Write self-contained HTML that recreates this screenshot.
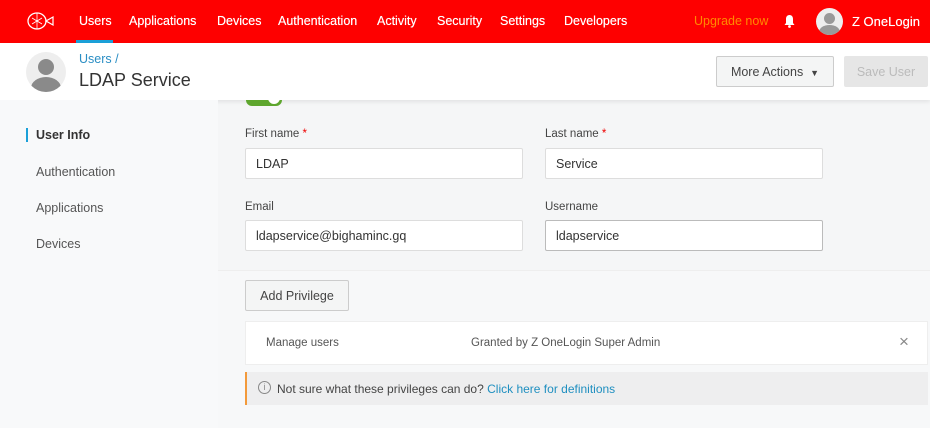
<!DOCTYPE html>
<html><head><style>
*{box-sizing:border-box;margin:0;padding:0}
body{width:930px;height:428px;overflow:hidden;font-family:"Liberation Sans",sans-serif;background:#f5f6f7;position:relative;color:#333}
.top{position:absolute;left:0;top:0;width:930px;height:43px;background:#fe0000;color:#fff;font-size:12.5px;text-shadow:0 0 .4px #fff}
.top span{position:absolute;top:14px}
.sub{position:absolute;left:0;top:43px;width:930px;height:57px;background:#fff;box-shadow:0 2px 4px rgba(0,0,0,.08)}
.side{position:absolute;left:0;top:100px;width:218px;height:328px;background:#f8f9fa}
.side div{position:absolute;left:36px;font-size:12.5px;color:#555}
.lbl{position:absolute;font-size:11.5px;color:#444}
.inp{position:absolute;width:278px;height:31px;background:#fff;border:1px solid #ddd;border-radius:2px;font-size:12.5px;padding:8px 10px;color:#333}
.btn{position:absolute;border:1px solid #ccc;background:#f4f5f5;font-size:12.5px;color:#444;text-align:center;border-radius:2px}
</style></head><body>
<div class="top">
<svg style="position:absolute;left:26px;top:10px" width="30" height="22" viewBox="0 0 30 22"><ellipse cx="11" cy="11" rx="9" ry="8" fill="none" stroke="#fff" stroke-width="1.3"/><path d="M6 8l10 6M6 14l10-6M11 3v16" stroke="#fff" stroke-width=".8"/><path d="M20 11l7-4v8z" fill="none" stroke="#fff" stroke-width="1.2"/></svg>
<span style="left:79px">Users</span>
<div style="position:absolute;left:76px;top:40px;width:37px;height:3px;background:#1ba0d8"></div>
<span style="left:129px">Applications</span>
<span style="left:217px">Devices</span>
<span style="left:278px">Authentication</span>
<span style="left:377px">Activity</span>
<span style="left:437px">Security</span>
<span style="left:500px">Settings</span>
<span style="left:564px">Developers</span>
<span style="left:694px;color:#ff8a00;text-shadow:none">Upgrade now</span>
<svg style="position:absolute;left:783px;top:14px" width="13" height="14" viewBox="0 0 13 14"><path d="M6.5 1C4 1 3 3 3 5v4L1.5 11h10L10 9V5c0-2-1-4-3.5-4z" fill="#fff"/><circle cx="6.5" cy="12.5" r="1.4" fill="#fff"/></svg>
<div style="position:absolute;left:816px;top:8px;width:27px;height:27px;border-radius:50%;background:#eee;overflow:hidden"><div style="position:absolute;left:8px;top:5px;width:11px;height:11px;border-radius:50%;background:#999"></div><div style="position:absolute;left:3px;top:17px;width:21px;height:14px;border-radius:50%;background:#999"></div></div>
<span style="left:852px;font-size:13px">Z OneLogin</span>
</div>
<div class="sub">
<div style="position:absolute;left:26px;top:9px;width:40px;height:40px;border-radius:50%;background:#eee;overflow:hidden"><div style="position:absolute;left:12px;top:7px;width:16px;height:16px;border-radius:50%;background:#8a8a8a"></div><div style="position:absolute;left:5px;top:25px;width:30px;height:22px;border-radius:50%;background:#8a8a8a"></div></div>
<div style="position:absolute;left:79px;top:9px;font-size:12.5px;color:#2a8ec4">Users /</div>
<div style="position:absolute;left:79px;top:27px;font-size:18px;color:#333">LDAP Service</div>
<div class="btn" style="left:716px;top:13px;width:118px;height:31px;padding-top:8px">More Actions &nbsp;<span style="font-size:9px">▼</span></div>
<div class="btn" style="left:844px;top:13px;width:84px;height:31px;padding-top:8px;background:#e6e6e6;border-color:#e6e6e6;color:#bbb">Save User</div>
</div>
<div class="side">
<div style="left:26px;top:28px;width:2px;height:14px;background:#1ba0d8"></div>
<div style="top:28px;font-weight:bold;color:#333">User Info</div>
<div style="top:65px">Authentication</div>
<div style="top:101px">Applications</div>
<div style="top:137px">Devices</div>
</div>
<div style="position:absolute;left:246px;top:100px;width:36px;height:6px;background:#5ea62e;border-radius:0 0 8px 8px;overflow:hidden"><div style="position:absolute;left:22px;top:-8px;width:12px;height:12px;border-radius:50%;background:#fff"></div></div>
<div class="lbl" style="left:245px;top:128px">First name <span style="color:#e00">*</span></div>
<div class="lbl" style="left:545px;top:128px">Last name <span style="color:#e00">*</span></div>
<div class="inp" style="left:245px;top:148px">LDAP</div>
<div class="inp" style="left:545px;top:148px">Service</div>
<div class="lbl" style="left:245px;top:201px">Email</div>
<div class="lbl" style="left:545px;top:201px">Username</div>
<div class="inp" style="left:245px;top:220px">ldapservice@bighaminc.gq</div>
<div class="inp" style="left:545px;top:220px;border-color:#bbb">ldapservice</div>
<div style="position:absolute;left:218px;top:270px;width:712px;height:158px;background:#f7f8f9;border-top:1px solid #eee"></div>
<div class="btn" style="left:245px;top:280px;width:104px;height:31px;padding-top:8px">Add Privilege</div>
<div style="position:absolute;left:245px;top:321px;width:683px;height:44px;background:#fff;border:1px solid #eee;font-size:11.5px;color:#555">
<span style="position:absolute;left:20px;top:15px">Manage users</span>
<span style="position:absolute;left:225px;top:15px">Granted by Z OneLogin Super Admin</span>
<span style="position:absolute;left:653px;top:10px;font-size:17px;color:#888">×</span>
</div>
<div style="position:absolute;left:245px;top:372px;width:683px;height:33px;background:#eeeeef;border-left:2px solid #f39a3b;font-size:12px;color:#444">
<span style="position:absolute;left:11px;top:9px;width:13px;height:13px;border:1px solid #888;border-radius:50%;font-size:9px;text-align:center;line-height:11px;color:#888">i</span>
<span style="position:absolute;left:30px;top:10px">Not sure what these privileges can do? <span style="color:#1f8fc0">Click here for definitions</span></span>
</div>
</body></html>
